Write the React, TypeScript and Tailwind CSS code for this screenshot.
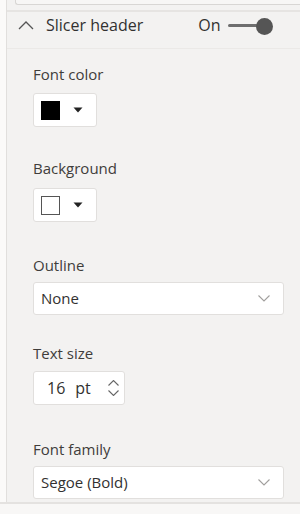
import React from 'react';

const font = { fontFamily: '"Open Sans", "Noto Sans", sans-serif' };

function Caret() {
  return (
    <svg width="10" height="6" viewBox="0 0 10 6" className="ml-[13px]">
      <path d="M0.5 0.5 L9.5 0.5 L5 5.5 Z" fill="#222" />
    </svg>
  );
}

function ChevronDown() {
  return (
    <svg width="12" height="7" viewBox="0 0 12 7">
      <path d="M0.5 0.5 L6 6 L11.5 0.5" fill="none" stroke="#a19f9d" strokeWidth="1.1" />
    </svg>
  );
}

function ColorButton({ filled }: { filled: boolean }) {
  return (
    <div className="flex items-center w-[64px] h-[34px] bg-white border border-[#e1dfdd] rounded-[3px] pl-[7px]">
      <div
        className={
          filled
            ? 'w-[19px] h-[19px] bg-black'
            : 'w-[19px] h-[19px] bg-white border-[1.5px] border-[#555]'
        }
      />
      <Caret />
    </div>
  );
}

function Dropdown({ value }: { value: string }) {
  return (
    <div className="flex items-center justify-between w-[251px] h-[33px] bg-white border border-[#e1dfdd] rounded-[3px] pl-[7px] pr-[13px]">
      <span className="text-[15px] text-[#323130]">{value}</span>
      <ChevronDown />
    </div>
  );
}

function Label({ text }: { text: string }) {
  return <div className="text-[15px] leading-[20px] text-[#3f3d3b]">{text}</div>;
}

export default function App() {
  return (
    <div className="w-[300px] h-[514px] overflow-hidden bg-[#f8f7f6] flex flex-col" style={font}>
      <div className="h-[504px] flex border-b-2 border-[#e4e2e0]">
        <div className="w-[7px] bg-[#fbfaf9] border-r border-[#e1dfdd]" />
        <div className="flex-1 flex flex-col bg-[#f3f2f1]">
          <div className="h-[12px] border-b-2 border-[#e6e4e2] flex">
            <div className="ml-[8px] flex-1 h-[5px] bg-[#f7f6f5] border border-t-0 border-r-0 border-[#d8d6d4] rounded-bl-[3px]" />
          </div>
          <div className="h-[37px] border-b border-[#ebe9e7] flex items-start pt-[2px]">
            <div className="flex items-center h-[22px] w-full">
              <svg width="16" height="10" viewBox="0 0 16 10" className="ml-[11px]">
                <path d="M1 9 L8 2 L15 9" fill="none" stroke="#555" strokeWidth="1.3" />
              </svg>
              <span className="ml-[12px] text-[16px] text-[#323130]">Slicer header</span>
              <span className="ml-[55px] text-[16px] text-[#323130]">On</span>
              <div className="ml-[8px] flex items-center">
                <div className="w-[30px] h-[3px] bg-[#6e6e6e] rounded-full" />
                <div className="w-[17px] h-[17px] rounded-full bg-[#555] -ml-[2px] mt-[2px]" />
              </div>
            </div>
          </div>
          <div className="pl-[26px] flex flex-col">
            <div className="mt-[15px]">
              <Label text="Font color" />
              <div className="mt-[9px]">
                <ColorButton filled />
              </div>
            </div>
            <div className="mt-[31px]">
              <Label text="Background" />
              <div className="mt-[10px]">
                <ColorButton filled={false} />
              </div>
            </div>
            <div className="mt-[33px]">
              <Label text="Outline" />
              <div className="mt-[7px]">
                <Dropdown value="None" />
              </div>
            </div>
            <div className="mt-[28px]">
              <Label text="Text size" />
              <div className="mt-[8px] flex items-center w-[92px] h-[34px] bg-white border border-[#e1dfdd] rounded-[3px]">
                <span className="ml-[13px] text-[16px] text-[#323130]">16</span>
                <span className="ml-[10px] text-[16px] text-[#323130]">pt</span>
                <div className="ml-auto mr-[5px] flex flex-col gap-[4px]">
                  <svg width="11" height="6" viewBox="0 0 11 6">
                    <path d="M0.5 5.5 L5.5 0.5 L10.5 5.5" fill="none" stroke="#666" strokeWidth="1.1" />
                  </svg>
                  <svg width="11" height="6" viewBox="0 0 11 6">
                    <path d="M0.5 0.5 L5.5 5.5 L10.5 0.5" fill="none" stroke="#666" strokeWidth="1.1" />
                  </svg>
                </div>
              </div>
            </div>
            <div className="mt-[34px]">
              <Label text="Font family" />
              <div className="mt-[7px]">
                <Dropdown value="Segoe (Bold)" />
              </div>
            </div>
          </div>
        </div>
      </div>
    </div>
  );
}
